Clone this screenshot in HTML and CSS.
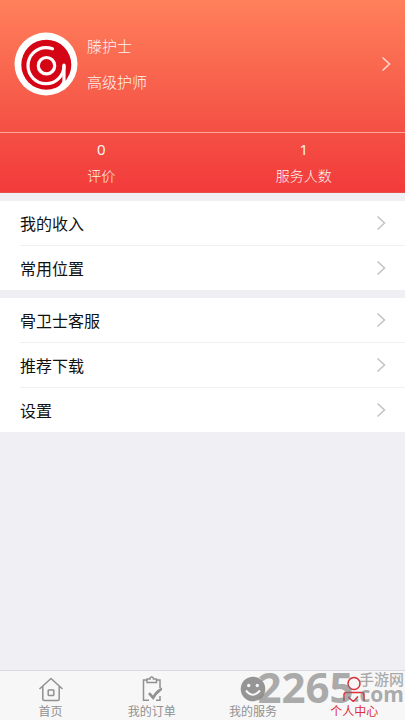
FILE: index.html
```html
<!DOCTYPE html>
<html lang="zh-CN">
<head>
<meta charset="utf-8">
<meta name="viewport" content="width=device-width, initial-scale=1">
<title>个人中心</title>
<link rel="stylesheet" href="styles.css">
</head>
<body>
<header class="hero">
  <a class="profile" href="#profile">
    <svg class="avatar" viewBox="0 0 64 64" aria-hidden="true">
      <circle cx="32" cy="32" r="31.5" fill="#fff"/>
      <circle cx="32.3" cy="32.7" r="25" fill="#d40615"/>
      <g fill="none" stroke="#fff" stroke-width="3.2" stroke-linecap="round">
        <circle cx="32.5" cy="33.7" r="8.200"/>
        <path d="M38.500 16.800Q35 15.700 32 15.700A18 18 0 1 0 50 34"/>
        <path d="M50 33V56"/>
      </g>
      <path d="M50 46V57L40 58Q47 54 50 46Z" fill="#fff"/>
    </svg>
    <span class="identity"><span>滕护士</span><span>高级护师</span></span>
    <svg class="chevron" viewBox="0 0 10 16" aria-hidden="true"><path d="M1.5 1.5L8.5 8L1.5 14.5"/></svg>
  </a>
  <div class="stats">
    <a href="#reviews"><span class="count">0</span><span>评价</span></a>
    <a href="#served"><span class="count">1</span><span>服务人数</span></a>
  </div>
</header>
<main class="menus">
  <nav class="menu">
    <a href="#income">我的收入<svg class="chevron" viewBox="0 0 10 16" aria-hidden="true"><path d="M1.5 1.5L8.5 8L1.5 14.5"/></svg></a>
    <a href="#places">常用位置<svg class="chevron" viewBox="0 0 10 16" aria-hidden="true"><path d="M1.5 1.5L8.5 8L1.5 14.5"/></svg></a>
  </nav>
  <nav class="menu">
    <a href="#support">骨卫士客服<svg class="chevron" viewBox="0 0 10 16" aria-hidden="true"><path d="M1.5 1.5L8.5 8L1.5 14.5"/></svg></a>
    <a href="#share">推荐下载<svg class="chevron" viewBox="0 0 10 16" aria-hidden="true"><path d="M1.5 1.5L8.5 8L1.5 14.5"/></svg></a>
    <a href="#settings">设置<svg class="chevron" viewBox="0 0 10 16" aria-hidden="true"><path d="M1.5 1.5L8.5 8L1.5 14.5"/></svg></a>
  </nav>
</main>
<nav class="tabs">
  <a href="#home">
    <svg viewBox="0 0 26 26" aria-hidden="true"><path d="M1.500 13L13 2.500L24.500 13M4.800 10.500V23Q4.800 24.500 6.300 24.500H19.700Q21.200 24.500 21.200 23V10.500"/><rect x="10.200" y="14" width="5.600" height="5.400" rx=".6"/></svg>
    首页
  </a>
  <a href="#orders">
    <svg viewBox="0 0 26 26" aria-hidden="true"><path d="M8 4H4.500V24.300H10M17 4H21V12M21 20V24.300H17"/><path d="M8 3H11Q11 1 12.700 1T14.500 3H17.500V6.500H8Z"/><path class="solid" d="M9 18L11 16.300L14 19.500Q17.500 13.500 23 11.500V14Q17.500 18 14.300 24Z"/></svg>
    我的订单
  </a>
  <a href="#services">
    <svg viewBox="0 0 26 26" aria-hidden="true"><circle class="face" cx="13" cy="13" r="12.300"/><circle class="light" cx="8.700" cy="9.500" r="1.700"/><circle class="light" cx="17.300" cy="9.500" r="1.700"/><path class="smile" d="M6 14.500Q13 23 20 14.500"/></svg>
    我的服务
  </a>
  <a class="active" href="#me" aria-current="page">
    <svg viewBox="0 0 26 26" aria-hidden="true"><circle cx="13" cy="7.500" r="6"/><path d="M3 25V19Q3 16.500 5.500 16.500H20.500Q23 16.500 23 19V25M8 20.500V22L12.500 25.500L17 20.500"/></svg>
    个人中心
  </a>
  <div class="watermark" aria-hidden="true">
    <span class="number">2265</span>
    <span class="site"><span>手游网</span><span class="domain">.com</span></span>
  </div>
</nav>
</body>
</html>
```
FILE: styles.css
```css
* { box-sizing: border-box; }

body {
  margin: 0;
  min-height: 100vh;
  display: flex;
  flex-direction: column;
  background: #efeff4;
  color: #111;
  font-family: "Noto Sans CJK SC", sans-serif;
  font-size: 16px;
}

a { color: inherit; text-decoration: none; }
svg { display: block; flex: none; }

.hero {
  background: linear-gradient(#ff805b, #f45044 68%, #f23b3b);
  color: #fff3f0;
  font-weight: 300;
  border-bottom: 1px solid #e5504f;
}

.profile {
  display: flex;
  align-items: center;
  height: 132px;
  padding: 0 14px 4px;
}

.avatar { width: 64px; height: 64px; }

.identity {
  flex: 1;
  display: grid;
  gap: 12px;
  margin-left: 9px;
  font-size: 15px;
  line-height: 24px;
}

.chevron {
  width: 10px;
  height: 16px;
  fill: none;
  stroke: #c4c4c8;
  stroke-width: 1.6;
}

.hero .chevron { stroke: #ffd8cf; }

.stats {
  display: grid;
  grid-template-columns: 1fr 1fr;
  border-top: 1px solid #fba69c;
  padding: 3px 0 4px;
}

.stats a {
  display: grid;
  text-align: center;
  font-size: 14px;
  line-height: 26px;
}

.stats .count {
  font-family: "Noto Sans", sans-serif;
  font-size: 15px;
  font-weight: 400;
}

.menus {
  flex: 1;
  display: grid;
  align-content: start;
  gap: 8px;
  padding-top: 8px;
}

.menu { background: #fff; padding-left: 20px; }

.menu a {
  display: flex;
  align-items: center;
  justify-content: space-between;
  height: 44px;
  padding: 0 19px 1px 0;
}

.menu a + a {
  height: 45px;
  border-top: 1px solid #f0f0f2;
}

.tabs {
  position: sticky;
  bottom: 0;
  display: grid;
  grid-template-columns: repeat(4, 1fr);
  height: 50px;
  background: #f7f7f8;
  border-top: 1px solid #d9d9de;
}

.tabs a {
  display: flex;
  flex-direction: column;
  align-items: center;
  padding-top: 5px;
  color: #919191;
  font-size: 12px;
  line-height: 18px;
}

.tabs svg {
  width: 26px;
  height: 26px;
  fill: none;
  stroke: currentColor;
  stroke-width: 1.5;
}

.tabs .active { color: #dc2f38; }
.tabs .solid { fill: currentColor; stroke: none; }
.tabs .face { fill: #959595; stroke: none; }
.tabs .light { fill: #f7f7f8; stroke: none; }
.tabs .smile { stroke: #f7f7f8; stroke-width: 2; }

.watermark {
  position: absolute;
  right: 1px;
  top: 0;
  display: flex;
  align-items: center;
  height: 32px;
  color: #777;
  opacity: .6;
  pointer-events: none;
}

.number {
  font: 700 42px/32px "Open Sans", sans-serif;
}

.site {
  display: grid;
  justify-items: end;
  font-size: 15px;
  line-height: 15px;
  font-weight: 500;
}

.domain {
  font: 700 21px/17px "Open Sans", sans-serif;
}
```
